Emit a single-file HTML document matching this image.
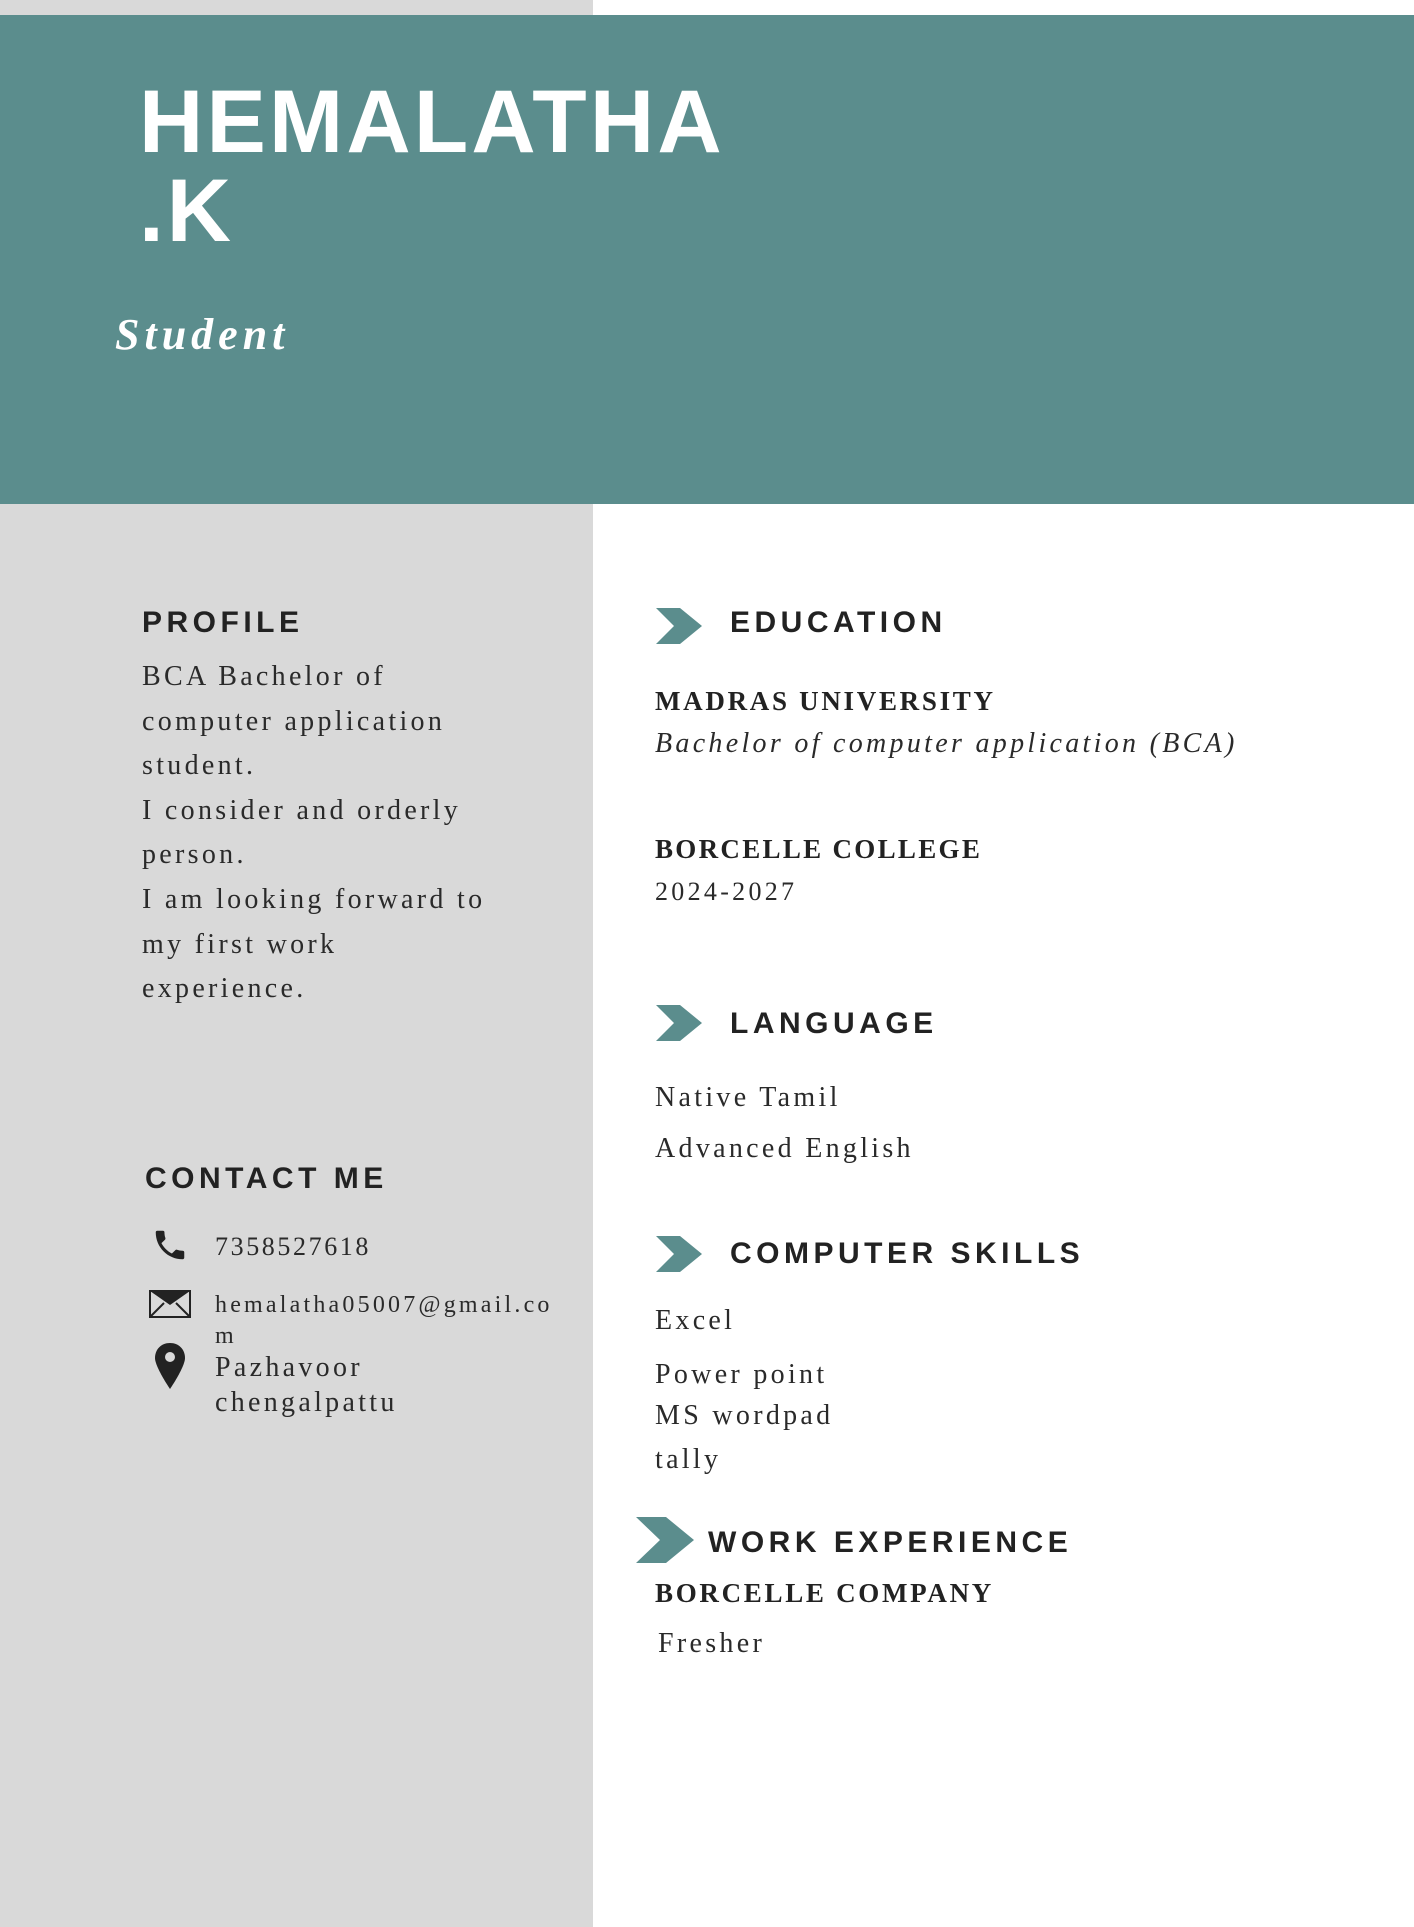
<!DOCTYPE html>
<html><head><meta charset="utf-8"><style>
*{margin:0;padding:0;box-sizing:border-box}
body{width:1414px;height:1927px;position:relative;background:#fff;overflow:hidden;font-family:"Liberation Serif",serif;color:#262626}
.a{position:absolute;white-space:nowrap;line-height:1}
.h{font-family:"Liberation Sans",sans-serif;font-weight:bold;font-size:30px;letter-spacing:4.5px;color:#222}
.s{font-size:28px;letter-spacing:3.3px;color:#2a2a2a}
.b{font-weight:bold;font-size:27px;letter-spacing:2.7px;color:#222}
svg{position:absolute}
</style></head><body>
<div style="position:absolute;left:0;top:0;width:593px;height:1927px;background:#d9d9d9"></div>
<div style="position:absolute;left:0;top:15px;width:1414px;height:489px;background:#5b8d8d"></div>

<div class="a" style="left:139px;top:77px;font-family:'Liberation Sans',sans-serif;font-weight:bold;font-size:89px;letter-spacing:3.2px;color:#fff">HEMALATHA</div>
<div class="a" style="left:139px;top:166px;font-family:'Liberation Sans',sans-serif;font-weight:bold;font-size:89px;letter-spacing:3px;color:#fff">.K</div>
<div class="a" style="left:115px;top:313px;font-style:italic;font-weight:bold;font-size:44px;letter-spacing:5px;color:#fff">Student</div>

<div class="a h" style="left:142px;top:608px">PROFILE</div>
<div class="a s" style="left:142px;top:655px;line-height:44.6px">BCA Bachelor of<br>computer application<br>student.<br>I consider and orderly<br>person.<br>I am looking forward to<br>my first work<br>experience.</div>

<div class="a h" style="left:145px;top:1164px">CONTACT ME</div>
<svg style="left:150px;top:1226px" width="40" height="38" viewBox="0 0 24 24"><path fill="#222" d="M6.6 10.8c1.4 2.8 3.8 5.1 6.6 6.6l2.2-2.2c.3-.3.7-.4 1-.2 1.1.4 2.3.6 3.6.6.6 0 1 .4 1 1V20c0 .6-.4 1-1 1C10.6 21 3 13.4 3 4c0-.6.4-1 1-1h3.5c.6 0 1 .4 1 1 0 1.3.2 2.5.6 3.6.1.3 0 .7-.2 1z"/></svg>
<div class="a s" style="left:215px;top:1234px;font-size:26px;letter-spacing:2.6px">7358527618</div>
<svg style="left:149px;top:1290px" width="42" height="28" viewBox="0 0 42 28"><rect x="1" y="1" width="40" height="26" fill="none" stroke="#222" stroke-width="2"/><path d="M1 1 L21 15 L41 1 Z" fill="#222"/><path d="M1 27 L15 13 M41 27 L27 13" stroke="#222" stroke-width="2"/></svg>
<div class="a s" style="left:215px;top:1293px;font-size:24px;letter-spacing:3.2px">hemalatha05007@gmail.co</div>
<div class="a s" style="left:215px;top:1324px;font-size:24px">m</div>
<svg style="left:154px;top:1343px" width="32" height="46" viewBox="0 0 32 46"><path fill="#222" d="M16 0C7 0 1 6.5 1 15c0 9 15 31 15 31s15-22 15-31C31 6.5 25 0 16 0z"/><circle cx="16" cy="14" r="5" fill="#d9d9d9"/></svg>
<div class="a s" style="left:215px;top:1354px">Pazhavoor</div>
<div class="a s" style="left:215px;top:1389px">chengalpattu</div>

<svg style="left:656px;top:608px" width="46" height="36" viewBox="0 0 46 36"><polygon points="0,0 24,0 46,18 24,36 0,36 18,18" fill="#5b8d8d"/></svg>
<div class="a h" style="left:730px;top:608px">EDUCATION</div>
<div class="a b" style="left:655px;top:688px">MADRAS UNIVERSITY</div>
<div class="a s" style="left:655px;top:730px;font-style:italic">Bachelor of computer application (BCA)</div>
<div class="a b" style="left:655px;top:836px;letter-spacing:2.3px">BORCELLE COLLEGE</div>
<div class="a s" style="left:655px;top:879px;font-size:26px">2024-2027</div>

<svg style="left:656px;top:1005px" width="46" height="36" viewBox="0 0 46 36"><polygon points="0,0 24,0 46,18 24,36 0,36 18,18" fill="#5b8d8d"/></svg>
<div class="a h" style="left:730px;top:1009px">LANGUAGE</div>
<div class="a s" style="left:655px;top:1084px">Native Tamil</div>
<div class="a s" style="left:655px;top:1135px">Advanced English</div>

<svg style="left:656px;top:1236px" width="46" height="36" viewBox="0 0 46 36"><polygon points="0,0 24,0 46,18 24,36 0,36 18,18" fill="#5b8d8d"/></svg>
<div class="a h" style="left:730px;top:1239px">COMPUTER SKILLS</div>
<div class="a s" style="left:655px;top:1307px">Excel</div>
<div class="a s" style="left:655px;top:1361px">Power point</div>
<div class="a s" style="left:655px;top:1402px">MS wordpad</div>
<div class="a s" style="left:655px;top:1446px">tally</div>

<svg style="left:636px;top:1517px" width="58" height="46" viewBox="0 0 58 46"><polygon points="0,0 30,0 58,23 30,46 0,46 24,23" fill="#5b8d8d"/></svg>
<div class="a h" style="left:708px;top:1528px">WORK EXPERIENCE</div>
<div class="a b" style="left:655px;top:1580px">BORCELLE COMPANY</div>
<div class="a s" style="left:658px;top:1630px">Fresher</div>
</body></html>
